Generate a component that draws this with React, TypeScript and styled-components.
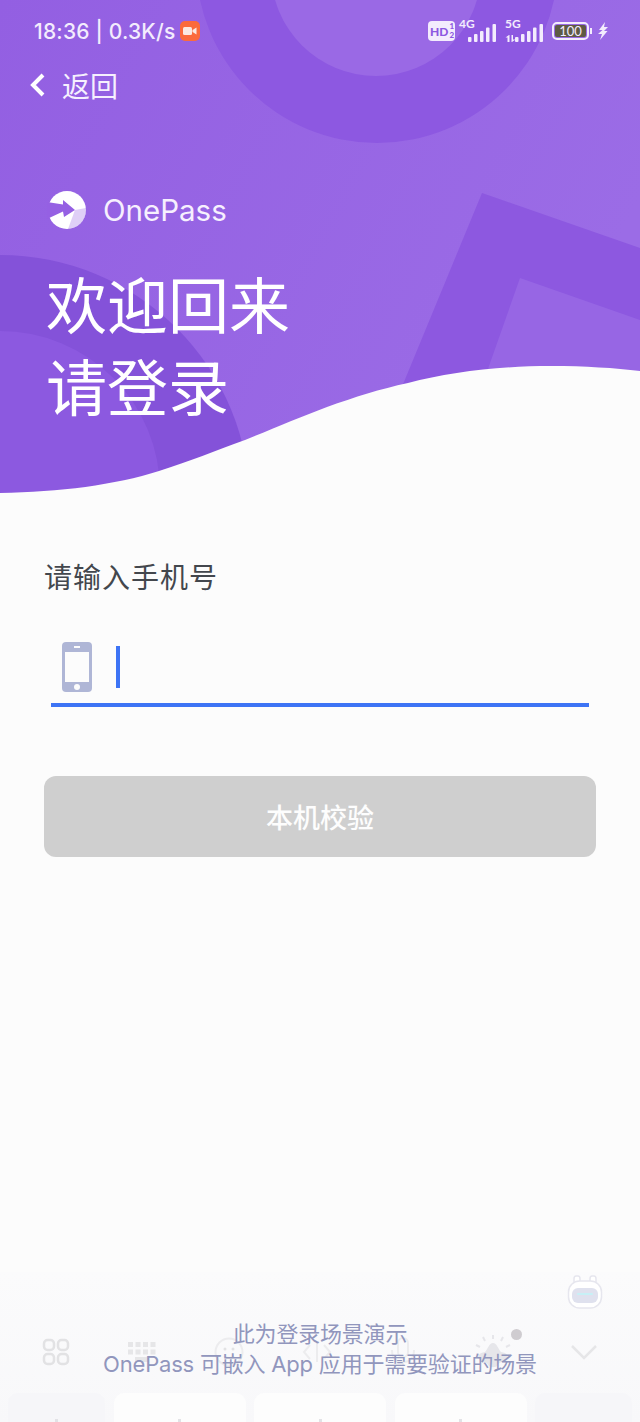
import { createGlobalStyle } from "styled-components";
import styled from "styled-components";

const CJK = `"Noto Sans CJK SC", "Noto Sans", sans-serif`;
const LATIN = `Inter, "Noto Sans CJK SC", sans-serif`;

const GlobalStyle = createGlobalStyle`
  html, body {
    margin: 0;
    padding: 0;
    background: #fcfcfc;
  }
  * {
    box-sizing: border-box;
  }
`;

const Bars = () => (
  <svg width="29" height="18" viewBox="0 0 29 18">
    <rect x="0" y="13" width="3.5" height="5" rx="1" fill="#f3ecfd" />
    <rect x="6" y="10" width="3.5" height="8" rx="1" fill="#f3ecfd" />
    <rect x="12" y="7" width="3.5" height="11" rx="1" fill="#f3ecfd" />
    <rect x="18" y="3.5" width="3.5" height="14.5" rx="1" fill="#f3ecfd" />
    <rect x="24.5" y="0" width="3.5" height="18" rx="1" fill="#f3ecfd" />
  </svg>
);

const App = () => {
  return (
    <Page>
      <GlobalStyle />
      <Hero>
        <HeroArt viewBox="0 0 640 500" preserveAspectRatio="none">
          <defs>
            <linearGradient id="heroBg" x1="0" y1="0" x2="1" y2="0.4">
              <stop offset="0" stopColor="#935fe2" />
              <stop offset="1" stopColor="#9b6ce6" />
            </linearGradient>
          </defs>
          <rect width="640" height="500" fill="url(#heroBg)" />
          <circle cx="377" cy="-38" r="181" fill="#8d58e1" />
          <circle cx="376" cy="-29" r="105" fill="#9a69e5" />
          <circle cx="0" cy="505" r="250" fill="#8452d9" />
          <circle cx="0" cy="491" r="160" fill="#8c59e0" />
          <path d="M482 193 L640 248 L640 420 L380 440 Z" fill="#8d58e0" />
          <path d="M520 278 L640 320 L640 420 L470 420 Z" fill="#9766e4" />
          <path
            d="M0 493 C 60 492 115 485 159 471 C 190 461 215 451 245 440 C 275 428 300 417 327 407 C 355 397 380 389 408 383 C 450 372 500 366 551 366 C 585 366 615 368 640 371 L640 500 L0 500 Z"
            fill="#fcfcfc"
          />
        </HeroArt>
        <StatusBar>
          <StatusLeft>
            <Clock>18:36 | 0.3K/s</Clock>
            <RecordBadge>
              <svg width="14" height="10" viewBox="0 0 14 10">
                <rect x="0" y="1" width="9" height="8" rx="1.5" fill="#fbe9e2" />
                <path d="M9.5 4 L13.5 1.5 V8.5 L9.5 6 Z" fill="#fbe9e2" />
              </svg>
            </RecordBadge>
          </StatusLeft>
          <StatusRight>
            <HdBadge>
              HD
              <HdFraction>
                <span>1</span>
                <span>2</span>
              </HdFraction>
            </HdBadge>
            <Signal>
              <NetLabel>4G</NetLabel>
              <Bars />
            </Signal>
            <Signal $wide>
              <NetLabel>5G</NetLabel>
              <DataArrows width="11" height="7" viewBox="0 0 11 7">
                <path d="M2.5 7 V2.5 H0.5 L4 0 H4.5 V7 Z M6.5 0 H8 V4.5 H10.5 L7 7 H6.5 Z" fill="#f3ecfd" />
              </DataArrows>
              <Bars />
            </Signal>
            <Battery>
              <BatteryFill>100</BatteryFill>
            </Battery>
            <BatteryNub />
            <svg width="10" height="18" viewBox="0 0 10 18">
              <path d="M7 0 L1 8 L4.5 8 L0 12 L4 12 L2 18 L9.5 9 L6 9 L10 5 L6 5 Z" fill="#f3ecfd" />
            </svg>
          </StatusRight>
        </StatusBar>
        <BackRow>
          <svg width="16" height="24" viewBox="0 0 16 24">
            <path d="M13 2 L3 12 L13 22" fill="none" stroke="#fff" strokeWidth="4" />
          </svg>
          <BackText>返回</BackText>
        </BackRow>
        <Brand>
          <svg width="40" height="40" viewBox="0 0 40 40">
            <circle cx="20" cy="20" r="19" fill="#fff" />
            <path d="M28 20 L39 18 A19 19 0 0 1 21 39 Z" fill="#9560e3" opacity="0.3" />
            <path d="M0 12 L16 14.5 L16 10 L28 20 L17 27 L16 21.5 L0 29 Z" fill="#9560e3" />
          </svg>
          <BrandName>OnePass</BrandName>
        </Brand>
        <Title>
          欢迎回来
          <br />
          请登录
        </Title>
      </Hero>
      <Main>
        <FieldLabel>请输入手机号</FieldLabel>
        <PhoneField>
          <svg width="30" height="50" viewBox="0 0 30 50">
            <rect width="30" height="50" rx="4" fill="#afb6d6" />
            <rect x="3" y="10" width="24" height="30" fill="#fcfcfc" />
            <rect x="12" y="4" width="6" height="2" fill="#fcfcfc" />
            <circle cx="15" cy="45" r="3" fill="#fcfcfc" />
          </svg>
          <Caret />
        </PhoneField>
        <SubmitButton>本机校验</SubmitButton>
      </Main>
      <Footer>
        <Robot>
          <svg width="36" height="36" viewBox="0 0 36 36">
            <path d="M9 2 Q7 2 7 5 V9 H13 V5 Q13 2 11 2 Z M25 2 Q23 2 23 5 V9 H29 V5 Q29 2 27 2 Z" fill="#fff" stroke="#e6e6ee" strokeWidth="1.5" />
            <rect x="1.5" y="7" width="33" height="27" rx="11" fill="#fff" stroke="#e6e6ee" strokeWidth="1.5" />
            <rect x="5" y="14" width="26" height="15" rx="6" fill="#dfe1ee" />
            <rect x="10" y="19" width="16" height="2" rx="1" fill="#c7f0f6" />
          </svg>
        </Robot>
        <KeyboardTools>
          <svg width="28" height="28" viewBox="0 0 28 28" fill="none" stroke="#e2e2e4" strokeWidth="2.5">
            <rect x="2" y="2" width="10" height="10" rx="3.5" />
            <rect x="16" y="2" width="10" height="10" rx="3.5" />
            <rect x="2" y="16" width="10" height="10" rx="3.5" />
            <rect x="16" y="16" width="10" height="10" rx="3.5" />
          </svg>
          <svg width="28" height="20" viewBox="0 0 28 20" fill="#e6e6e8">
            <rect x="0" y="0" width="5" height="5" />
            <rect x="7.5" y="0" width="5" height="5" />
            <rect x="15" y="0" width="5" height="5" />
            <rect x="22.5" y="0" width="5" height="5" />
            <rect x="0" y="7.5" width="5" height="5" />
            <rect x="7.5" y="7.5" width="5" height="5" />
            <rect x="15" y="7.5" width="5" height="5" />
            <rect x="22.5" y="7.5" width="5" height="5" />
            <rect x="7" y="15" width="14" height="5" />
          </svg>
          <svg width="30" height="30" viewBox="0 0 30 30" fill="none" stroke="#ececee" strokeWidth="2">
            <circle cx="15" cy="15" r="13.5" />
            <circle cx="11" cy="12" r="1.5" fill="#e2e2e4" stroke="none" />
            <circle cx="19" cy="12" r="1.5" fill="#e2e2e4" stroke="none" />
            <path d="M10 19 Q15 23 20 19" />
          </svg>
          <svg width="30" height="24" viewBox="0 0 30 24" fill="none" stroke="#ececee" strokeWidth="2">
            <path d="M8 5 L2 12 L8 19 M22 5 L28 12 L22 19 M15 2 V22" />
          </svg>
          <svg width="26" height="30" viewBox="0 0 26 30" fill="none" stroke="#ececee" strokeWidth="2">
            <rect x="8" y="1" width="10" height="19" rx="5" />
            <path d="M2 13 Q2 25 13 25 Q24 25 24 13 M13 25 V29" />
          </svg>
          <FlowerSlot>
            <svg width="38" height="34" viewBox="0 0 38 34" fill="#e6e6ea">
              <path d="M19 8 C23 8 24 14 27 17 C33 18 35 21 33 24 C30 28 25 26 24 30 C22 33 16 33 14 30 C13 26 8 28 5 24 C3 21 5 18 11 17 C14 14 15 8 19 8 Z" />
              <path d="M19 0 V4 M9 2 L11 6 M29 2 L27 6 M2 10 L6 12 M36 10 L32 12" stroke="#e6e6ea" strokeWidth="2" />
            </svg>
            <FlowerDot />
          </FlowerSlot>
          <svg width="28" height="16" viewBox="0 0 28 16" fill="none" stroke="#e6e6e8" strokeWidth="2.5">
            <path d="M2 2 L14 14 L26 2" />
          </svg>
        </KeyboardTools>
        <KeyRow>
          <Key $wide={97} $shade>
            <KeyMark />
          </Key>
          <Key $wide={132}>
            <KeyMark />
          </Key>
          <Key $wide={132}>
            <KeyMark />
          </Key>
          <Key $wide={132}>
            <KeyMark />
          </Key>
          <Key $wide={97} $shade />
        </KeyRow>
        <Caption>
          <CaptionLine>此为登录场景演示</CaptionLine>
          <CaptionLine>OnePass 可嵌入 App 应用于需要验证的场景</CaptionLine>
        </Caption>
      </Footer>
    </Page>
  );
};

export default App;

const Page = styled.div`
  width: 640px;
  height: 1422px;
  display: flex;
  flex-direction: column;
  overflow: hidden;
  background: #fcfcfc;
  font-family: ${CJK};
`;

const Hero = styled.header`
  position: relative;
  height: 500px;
  flex-shrink: 0;
  padding: 0 32px 0 34px;
  color: #fff;
`;

const HeroArt = styled.svg`
  position: absolute;
  left: 0;
  top: 0;
  width: 640px;
  height: 500px;
`;

const StatusBar = styled.div`
  position: relative;
  height: 62px;
  display: flex;
  align-items: center;
  justify-content: space-between;
`;

const StatusLeft = styled.div`
  display: flex;
  align-items: center;
  gap: 5px;
`;

const Clock = styled.span`
  font-family: Inter, sans-serif;
  font-size: 21px;
  font-weight: 500;
  letter-spacing: 0.2px;
  color: #f3ecfd;
`;

const RecordBadge = styled.span`
  width: 20px;
  height: 20px;
  border-radius: 5px;
  background: #fb6a3c;
  display: flex;
  align-items: center;
  justify-content: center;
`;

const StatusRight = styled.div`
  display: flex;
  align-items: center;
`;

const HdBadge = styled.span`
  width: 27px;
  height: 20px;
  border-radius: 4px;
  background: #f3ecfd;
  color: #8d58e1;
  font-family: Lato, sans-serif;
  font-size: 12px;
  font-weight: 900;
  display: flex;
  align-items: center;
  padding-left: 2px;
  margin-right: 4px;
`;

const HdFraction = styled.span`
  display: flex;
  flex-direction: column;
  font-size: 8px;
  line-height: 9px;
  margin-left: 1px;
`;

const Signal = styled.span<{ $wide?: boolean }>`
  position: relative;
  display: flex;
  justify-content: flex-end;
  align-items: flex-end;
  width: ${(p) => (p.$wide ? 39 : 38)}px;
  margin-left: ${(p) => (p.$wide ? 8 : 0)}px;
  height: 22px;
`;

const NetLabel = styled.span`
  position: absolute;
  left: 0;
  top: -2px;
  font-family: Lato, sans-serif;
  font-size: 12px;
  font-weight: 700;
  line-height: 12px;
  color: #f3ecfd;
`;

const DataArrows = styled.svg`
  position: absolute;
  left: 0;
  bottom: 0;
`;

const Battery = styled.span`
  width: 37px;
  height: 18px;
  margin-left: 8px;
  border: 2px solid #f3ecfd;
  border-radius: 5px;
  padding: 1px;
  display: flex;
`;

const BatteryFill = styled.span`
  flex: 1;
  background: #5e5a45;
  border-radius: 2px;
  color: #f3ecfd;
  font-family: Lato, sans-serif;
  font-size: 13px;
  line-height: 12px;
  text-align: center;
`;

const BatteryNub = styled.span`
  width: 2px;
  height: 6px;
  margin: 0 6px 0 1px;
  background: #f3ecfd;
`;

const BackRow = styled.div`
  position: relative;
  display: flex;
  align-items: center;
  gap: 16px;
  margin-left: -4px;
  height: 46px;
`;

const BackText = styled.span`
  font-size: 28px;
  color: #f6f0fe;
`;

const Brand = styled.div`
  position: relative;
  display: flex;
  align-items: center;
  gap: 16px;
  margin: 82px 0 0 13px;
  height: 40px;
`;

const BrandName = styled.span`
  font-family: Inter, sans-serif;
  font-size: 29.5px;
  color: #f6f0fe;
`;

const Title = styled.h1`
  position: relative;
  margin: 32px 0 0 12px;
  font-size: 61px;
  font-weight: 400;
  line-height: 82px;
  color: #fff;
`;

const Main = styled.main`
  flex: 1;
  padding: 56px 44px 0;
`;

const FieldLabel = styled.div`
  font-size: 28px;
  line-height: 40px;
  letter-spacing: 1px;
  color: #43474d;
`;

const PhoneField = styled.div`
  margin: 46px 7px 0;
  height: 65px;
  padding: 0 0 11px 11px;
  display: flex;
  align-items: center;
  gap: 24px;
  border-bottom: 4px solid #3d74f5;
`;

const Caret = styled.span`
  width: 4px;
  height: 42px;
  background: #3d74f5;
`;

const SubmitButton = styled.button`
  display: block;
  width: 100%;
  height: 81px;
  margin-top: 69px;
  border: 0;
  border-radius: 12px;
  background: #cfcfcf;
  color: #fdfdfd;
  font-family: ${CJK};
  font-size: 27px;
  font-weight: 500;
`;

const Footer = styled.footer`
  position: relative;
  height: 150px;
  flex-shrink: 0;
  background: linear-gradient(#fbfbfc, #f8f8fa);
  overflow: hidden;
`;

const Robot = styled.div`
  height: 42px;
  padding-top: 2px;
  display: flex;
  justify-content: flex-end;
  padding-right: 37px;
`;

const KeyboardTools = styled.div`
  height: 76px;
  padding: 0 42px;
  display: flex;
  align-items: center;
  justify-content: space-between;
`;

const FlowerSlot = styled.div`
  position: relative;
  display: flex;
`;

const FlowerDot = styled.span`
  position: absolute;
  right: -10px;
  top: -6px;
  width: 11px;
  height: 11px;
  border-radius: 50%;
  background: #cfccd0;
`;

const KeyRow = styled.div`
  height: 60px;
  padding: 3px 8px 0;
  display: flex;
  gap: 8.5px;
`;

const Key = styled.span<{ $wide: number; $shade?: boolean }>`
  width: ${(p) => p.$wide}px;
  height: 60px;
  border-radius: 10px;
  padding-top: 26px;
  display: flex;
  justify-content: center;
  background: ${(p) => (p.$shade ? "#f6f6f9" : "#fdfdfd")};
`;

const KeyMark = styled.span`
  width: 3px;
  height: 3px;
  background: #e2e2e6;
`;

const Caption = styled.div`
  position: absolute;
  left: 0;
  right: 0;
  top: 47px;
  text-align: center;
  font-family: ${LATIN};
  font-size: 22px;
  line-height: 30px;
  color: #9196bd;
`;

const CaptionLine = styled.div`
  letter-spacing: -0.2px;
`;
